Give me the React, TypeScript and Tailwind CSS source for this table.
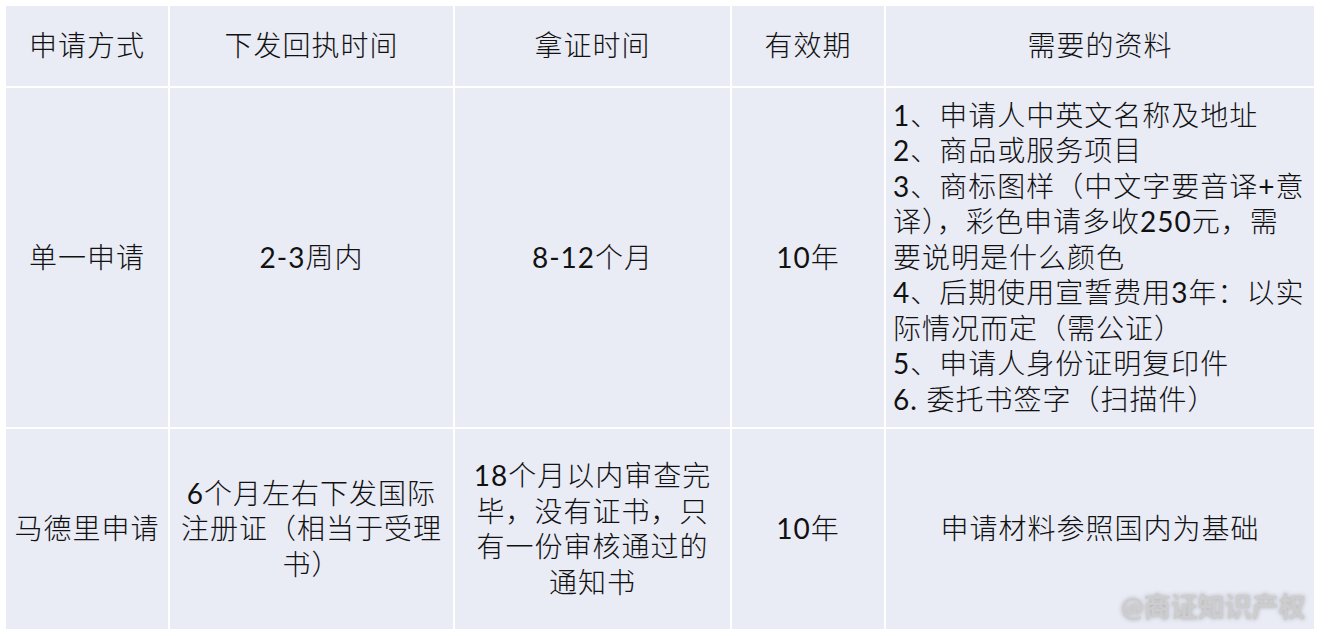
const font = { fontFamily: "Lato, 'Noto Sans CJK SC', sans-serif" };

// digits and latin marks render in regular weight, CJK stays light
function N({ children }: { children: React.ReactNode }) {
  return <span className="font-normal">{children}</span>;
}

function Cell({
  children,
  align = "center",
}: {
  children: React.ReactNode;
  align?: "center" | "left";
}) {
  return (
    <div
      className={`bg-[#e9ebf5] flex items-center ${
        align === "left" ? "justify-start pl-[7px]" : "justify-center text-center"
      }`}
    >
      <div className="leading-[35.5px]">{children}</div>
    </div>
  );
}

export default function App() {
  return (
    <div
      className="relative w-[1321px] h-[635px] bg-white pt-[6px] pl-[6px] text-[28px] font-light tracking-[1px] text-[#111]"
      style={font}
    >
      <div className="grid grid-cols-[162px_283px_275px_152px_428px] grid-rows-[80px_339px_200px] gap-[2px] w-fit">
        {/* Header */}
        <Cell>申请方式</Cell>
        <Cell>下发回执时间</Cell>
        <Cell>拿证时间</Cell>
        <Cell>有效期</Cell>
        <Cell>需要的资料</Cell>

        {/* 单一申请 */}
        <Cell>单一申请</Cell>
        <Cell>
          <N>2-3</N>周内
        </Cell>
        <Cell>
          <N>8-12</N>个月
        </Cell>
        <Cell>
          <N>10</N>年
        </Cell>
        <Cell align="left">
          <N>1</N>、申请人中英文名称及地址
          <br />
          <N>2</N>、商品或服务项目
          <br />
          <N>3</N>、商标图样（中文字要音译<N>+</N>意
          <br />
          译），彩色申请多收<N>250</N>元，需
          <br />
          要说明是什么颜色
          <br />
          <N>4</N>、后期使用宣誓费用<N>3</N>年：以实
          <br />
          际情况而定（需公证）
          <br />
          <N>5</N>、申请人身份证明复印件
          <br />
          <N>6.</N> 委托书签字（扫描件）
        </Cell>

        {/* 马德里申请 */}
        <Cell>马德里申请</Cell>
        <Cell>
          <N>6</N>个月左右下发国际
          <br />
          注册证（相当于受理
          <br />
          书）
        </Cell>
        <Cell>
          <N>18</N>个月以内审查完
          <br />
          毕，没有证书，只
          <br />
          有一份审核通过的
          <br />
          通知书
        </Cell>
        <Cell>
          <N>10</N>年
        </Cell>
        <Cell>申请材料参照国内为基础</Cell>
      </div>

      {/* watermark */}
      <div className="absolute left-[1121px] top-[587px] text-[27px] font-bold tracking-normal text-[#cdcdcd] [text-shadow:0_0_4px_rgba(110,110,110,0.5)]">
        @商证知识产权
      </div>
    </div>
  );
}
